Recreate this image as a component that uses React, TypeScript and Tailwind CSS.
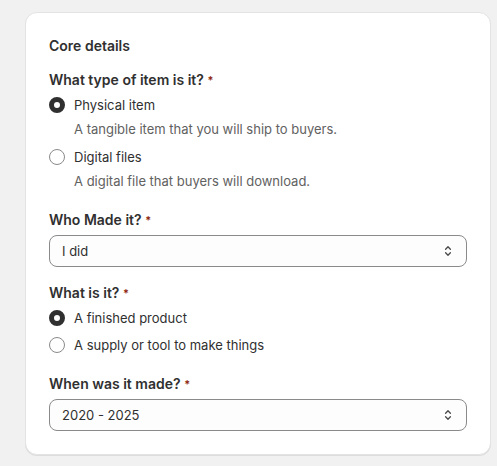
import type { ReactNode } from 'react';

// ─── Küçük parçalar ───────────────────────────────────────────────────────────

function Label({ children, className = '' }: { children: ReactNode; className?: string }) {
  return (
    <p className={`text-[14px] leading-5 font-semibold text-[#303030] ${className}`}>
      {children} <span className="text-[11px] align-top text-[#8e1f0b]">*</span>
    </p>
  );
}

function Radio({ label, checked, className = '' }: { label: string; checked?: boolean; className?: string }) {
  return (
    <div className={`flex items-center gap-[9px] ${className}`}>
      {checked ? (
        <span className="h-4 w-4 shrink-0 rounded-full border-[5px] border-[#303030] bg-white" />
      ) : (
        <span className="h-4 w-4 shrink-0 rounded-full border border-[#8a8a8a] bg-white" />
      )}
      <span className="text-[13px] leading-5 text-[#303030]">{label}</span>
    </div>
  );
}

function Hint({ children, className = '' }: { children: ReactNode; className?: string }) {
  return <p className={`pl-[25px] text-[13px] leading-5 text-[#616161] ${className}`}>{children}</p>;
}

function Select({ value, className = '' }: { value: string; className?: string }) {
  return (
    <div
      className={`flex h-8 items-center justify-between rounded-lg border border-[#8a8a8a] bg-[#fdfdfd] pl-3 pr-2 ${className}`}
    >
      <span className="text-[13px] leading-5 text-[#303030]">{value}</span>
      <svg width="20" height="20" viewBox="0 0 20 20" fill="none">
        <path d="M7.6 8.2 10 5.8l2.4 2.4" stroke="#4a4a4a" strokeWidth="1.3" strokeLinecap="round" strokeLinejoin="round" />
        <path d="M7.6 11.8 10 14.2l2.4-2.4" stroke="#4a4a4a" strokeWidth="1.3" strokeLinecap="round" strokeLinejoin="round" />
      </svg>
    </div>
  );
}

// ─── Sayfa ────────────────────────────────────────────────────────────────────

export default function App() {
  return (
    <div
      className="min-h-[466px] w-full bg-[#f1f1f1] pl-[25px] pr-[6px] pt-3"
      style={{ fontFamily: 'Inter, "Noto Sans", sans-serif' }}
    >
      <div className="flex w-[466px] flex-col rounded-xl border border-[#e3e3e3] bg-white px-[23px] pb-[23px] pt-[23px] shadow-[0_1px_0_0_rgba(26,26,26,0.09)]">
        <h2 className="text-sm leading-5 font-semibold text-[#303030]">Core details</h2>

        <Label className="mt-[14px]">What type of item is it?</Label>
        <Radio className="mt-[5px]" label="Physical item" checked />
        <Hint className="mt-1">A tangible item that you will ship to buyers.</Hint>
        <Radio className="mt-2" label="Digital files" />
        <Hint className="mt-1">A digital file that buyers will download.</Hint>

        <Label className="mt-[19px]">Who Made it?</Label>
        <Select className="mt-[5px]" value="I did" />

        <Label className="mt-4">What is it?</Label>
        <Radio className="mt-[5px]" label="A finished product" checked />
        <Radio className="mt-[7px]" label="A supply or tool to make things" />

        <Label className="mt-[19px]">When was it made?</Label>
        <Select className="mt-[5px]" value="2020 - 2025" />
      </div>
    </div>
  );
}
